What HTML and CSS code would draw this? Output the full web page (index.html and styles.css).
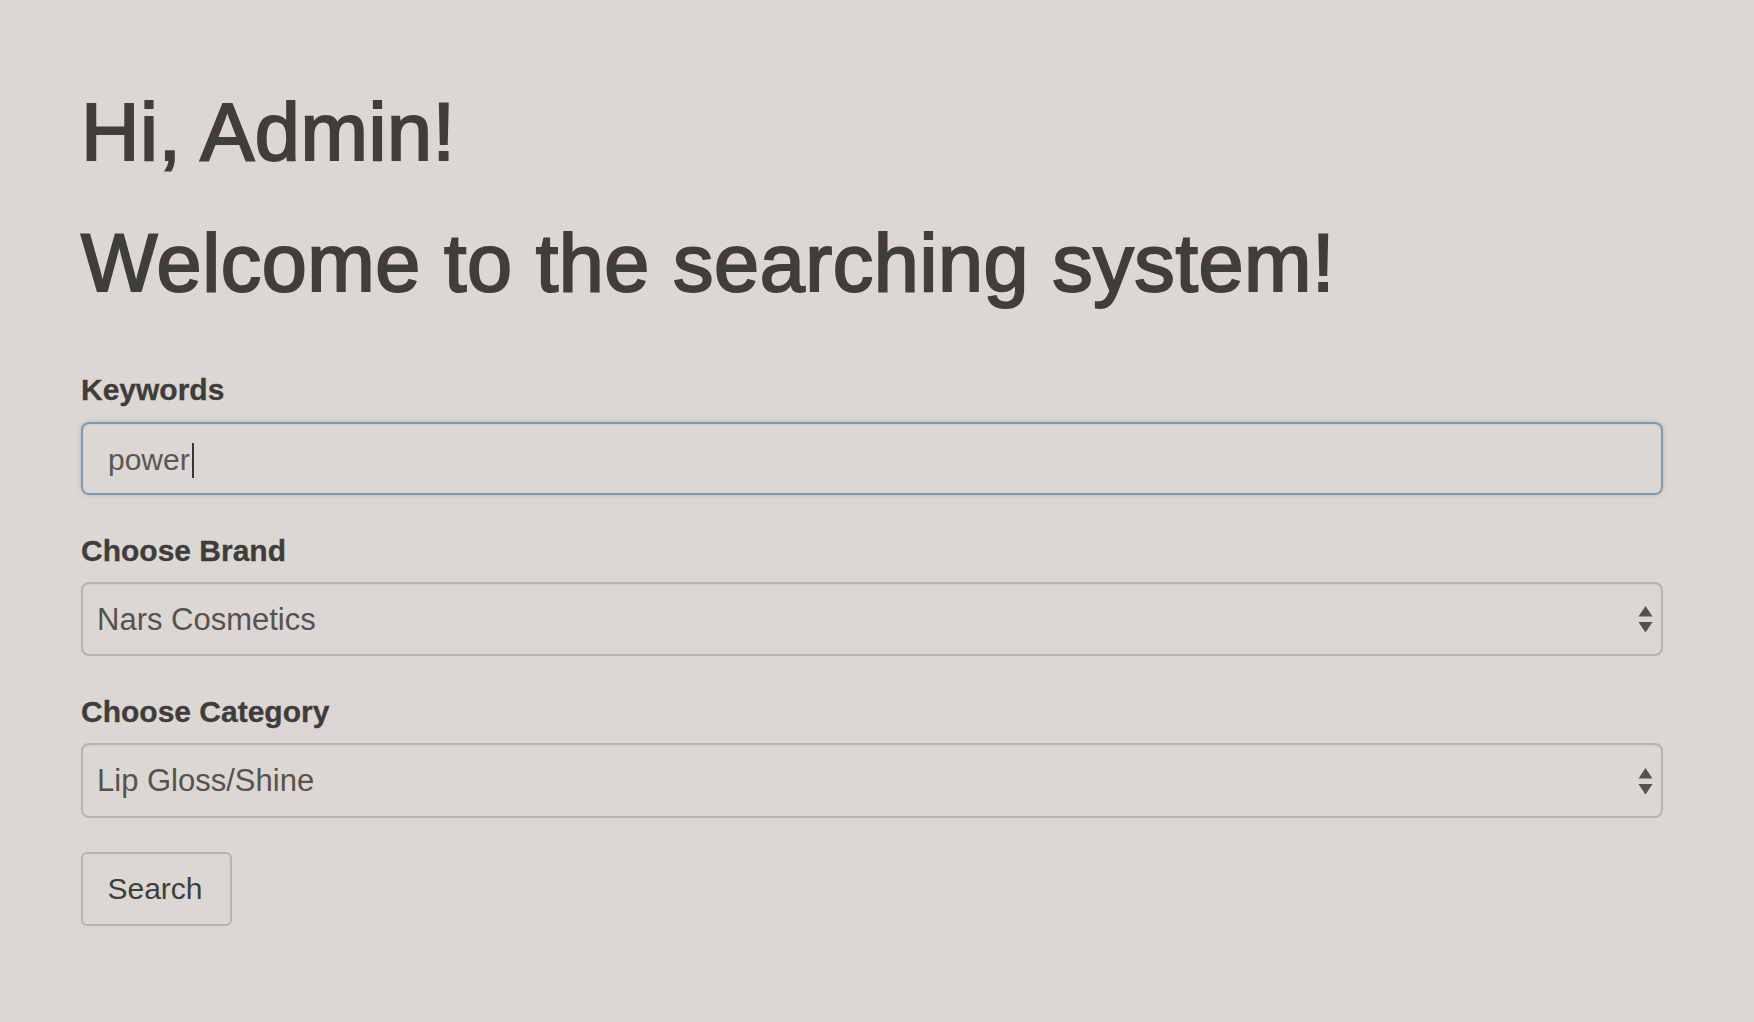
FILE: index.html
```html
<!DOCTYPE html>
<html lang="en">
<head>
<meta charset="utf-8">
<title>Searching system</title>
<link rel="stylesheet" href="styles.css">
</head>
<body>
<main class="page">
  <h1 class="title">Hi, Admin!</h1>
  <h1 class="title title-second">Welcome to the searching system!</h1>
  <form class="search-form">
    <div class="form-group">
      <label class="label">Keywords</label>
      <div class="field field-focus"><span class="field-text">power</span><span class="caret"></span></div>
    </div>
    <div class="form-group">
      <label class="label">Choose Brand</label>
      <div class="select-wrap">
        <select class="select"><option>Nars Cosmetics</option></select>
        <svg class="arrows" width="15" height="28" viewBox="0 0 15 28"><path d="M7.5 0 L14.5 10.5 L0.5 10.5 Z M0.5 16 L14.5 16 L7.5 26.5 Z" fill="#55524e"/></svg>
      </div>
    </div>
    <div class="form-group">
      <label class="label">Choose Category</label>
      <div class="select-wrap">
        <select class="select select-tall"><option>Lip Gloss/Shine</option></select>
        <svg class="arrows" width="15" height="28" viewBox="0 0 15 28"><path d="M7.5 0 L14.5 10.5 L0.5 10.5 Z M0.5 16 L14.5 16 L7.5 26.5 Z" fill="#55524e"/></svg>
      </div>
    </div>
    <button type="button" class="btn">Search</button>
  </form>
</main>
</body>
</html>
```
FILE: styles.css
```css
html, body {
  margin: 0;
  padding: 0;
  background: #dbd8d3;
}
body {
  font-family: "Liberation Sans", Arial, sans-serif;
  color: #403e3b;
}
.page {
  padding: 88px 91px 0 81px;
  width: 1582px;
}
.title {
  margin: 0;
  font-size: 81px;
  line-height: 89px;
  font-weight: 400;
  letter-spacing: 0.55px;
  -webkit-text-stroke: 2.1px #403e3b;
  color: #403e3b;
}
.title-second {
  margin-top: 42px;
}
.search-form {
  margin-top: 61px;
  display: flex;
  flex-direction: column;
  align-items: flex-start;
}
.form-group {
  display: flex;
  flex-direction: column;
  width: 100%;
  margin-bottom: 35px;
}
.form-group:nth-child(3) {
  margin-bottom: 34px;
}
.label {
  font-size: 30px;
  line-height: 42px;
  font-weight: 700;
  margin-bottom: 10px;
  color: #3f3d3a;
  -webkit-text-stroke: 0.3px #3f3d3a;
}
.field {
  box-sizing: border-box;
  height: 73px;
  margin-top: 1px;
  border: 2px solid #7e9ab4;
  border-radius: 8px;
  box-shadow: 0 0 4px rgba(126, 154, 180, 0.5), inset 0 1px 2px rgba(0,0,0,0.05);
  display: flex;
  align-items: center;
  padding-left: 25px;
  font-size: 30px;
  color: #5a5753;
}
.field-text {
  position: relative;
  top: 1px;
}
.caret {
  display: inline-block;
  width: 2px;
  height: 35px;
  background: #3a3835;
  margin-left: 2px;
  position: relative;
  top: 2px;
}
.select-wrap {
  position: relative;
  width: 100%;
}
.select {
  -webkit-appearance: none;
  appearance: none;
  box-sizing: border-box;
  width: 100%;
  height: 74px;
  border: 2px solid #b8b5b0;
  border-radius: 8px;
  background: #dbd8d3;
  box-shadow: inset 0 1px 2px rgba(0,0,0,0.06);
  padding: 0 0 0 14px;
  font-family: "Liberation Sans", Arial, sans-serif;
  font-size: 31px;
  color: #56534f;
  outline: none;
}
.select-tall {
  height: 75px;
}
.arrows {
  position: absolute;
  right: 10px;
  top: 50%;
  margin-top: -13px;
}
.btn {
  box-sizing: border-box;
  width: 151px;
  height: 74px;
  border: 2px solid #b8b5b0;
  border-radius: 6px;
  background: #dbd8d3;
  font-family: "Liberation Sans", Arial, sans-serif;
  font-size: 30px;
  color: #403e3b;
  padding: 0 3px 0 0;
  cursor: pointer;
}
```
